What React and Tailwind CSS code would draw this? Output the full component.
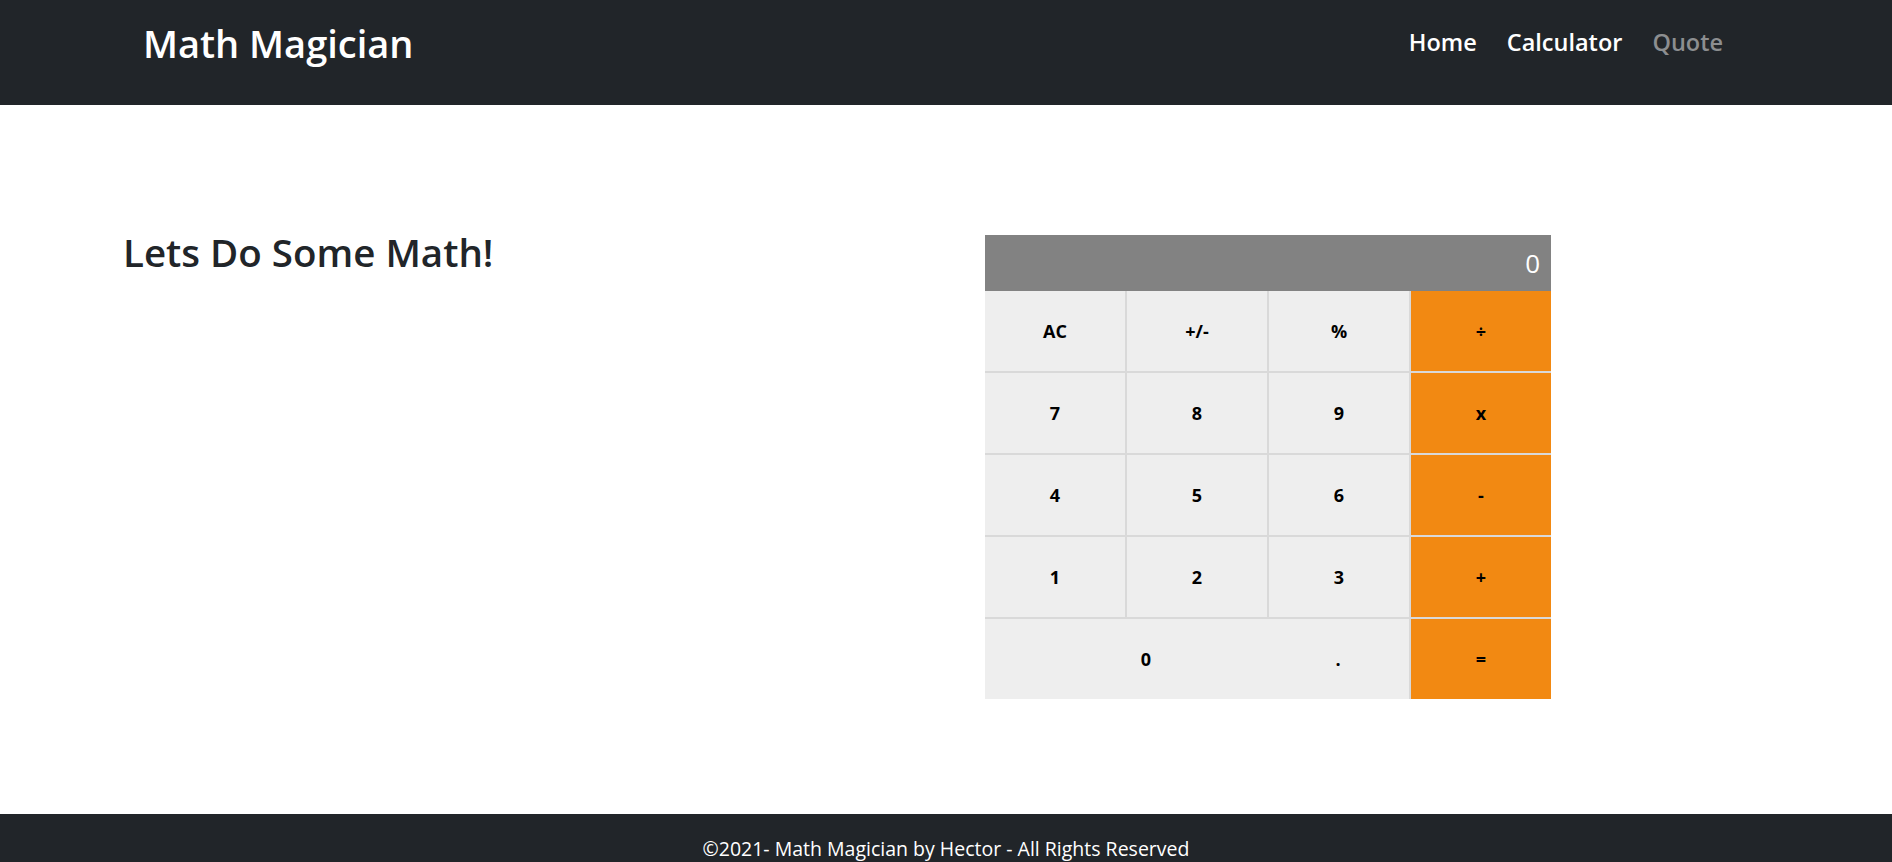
import React from 'react';

const rows = [
  ['AC', '+/-', '%', '÷'],
  ['7', '8', '9', 'x'],
  ['4', '5', '6', '-'],
  ['1', '2', '3', '+'],
];

const font = { fontFamily: '"Open Sans", "Noto Sans", sans-serif' };

const Key = ({ label, orange }) => (
  <button
    type="button"
    className={`h-[80px] flex items-center justify-center text-[18px] font-bold text-black ${orange ? 'bg-[#f28912]' : 'bg-[#eeeeee]'}`}
  >
    {label}
  </button>
);

const Calculator = () => (
  <div className="w-[566px]">
    <div className="h-[56px] bg-[#828282] flex items-center justify-end pr-[11px] text-[26px] text-white">0</div>
    <div className="grid grid-cols-4 gap-[2px] bg-[#d9d9d9]">
      {rows.map((row) => row.map((k, i) => <Key key={k} label={k} orange={i === 3} />))}
      <div className="col-span-3 h-[80px] bg-[#eeeeee] flex">
        <button type="button" className="w-[282px] pl-[40px] text-[18px] font-bold text-black">0</button>
        <button type="button" className="flex-1 text-[18px] font-bold text-black">.</button>
      </div>
      <Key label="=" orange />
    </div>
  </div>
);

const App = () => {
  return (
    <div className="bg-white overflow-hidden h-[862px]" style={font}>
      <header className="h-[105px] bg-[#212529] flex items-center justify-between pl-[143px] pr-[169px] pb-[20px]">
        <span className="text-[38px] font-semibold text-white leading-none">Math Magician</span>
        <nav className="flex items-center gap-[30px] text-[23.5px] font-semibold">
          <a className="text-white">Home</a>
          <a className="text-white">Calculator</a>
          <a className="text-[#8c8e90]">Quote</a>
        </nav>
      </header>

      <main className="h-[709px] flex pt-[124px]">
        <div className="w-[985px] pl-[123px]">
          <h1 className="text-[38.5px] font-semibold text-[#212529] leading-[1.2]">Lets Do Some Math!</h1>
        </div>
        <div className="pt-[6px]">
          <Calculator />
        </div>
      </main>

      <footer className="h-[70px] bg-[#212529] flex items-center justify-center text-[19.5px] text-white">
        ©2021- Math Magician by Hector - All Rights Reserved
      </footer>
    </div>
  );
};

export default App;
